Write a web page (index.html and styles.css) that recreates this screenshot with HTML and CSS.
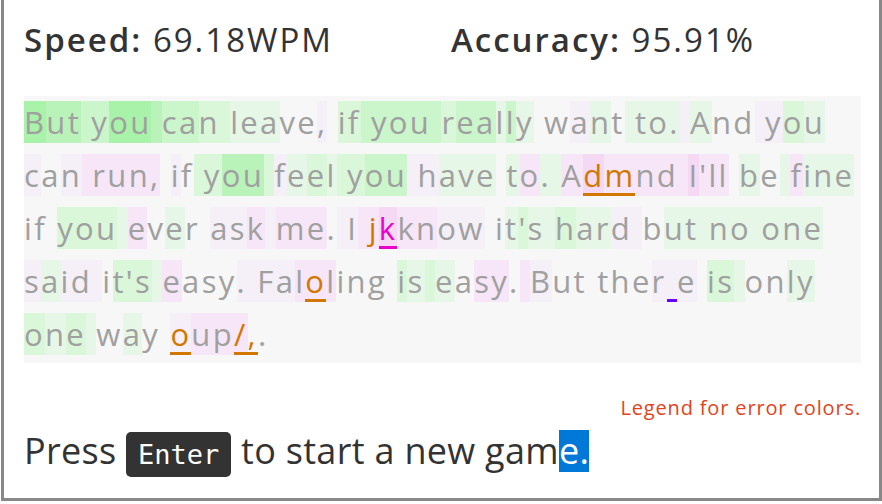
FILE: index.html
```html
<!DOCTYPE html>
<html>
<head>
<meta charset="utf-8">
<link rel="stylesheet" href="styles.css">
</head>
<body>
<div class="game">
  <div class="stats">
    <div class="stat"><span class="label">Speed:</span> 69.18WPM</div>
    <div class="stat"><span class="label">Accuracy:</span> 95.91%</div>
  </div>
  <div class="text">
<span class="g1">B</span><span class="g2">ut</span><span class="g3"> y</span><span class="g1">ou</span><span class="g2"> </span><span class="g3">ca</span><span class="g4">n </span><span class="g5">lea</span><span>ve</span><span class="p3">,</span><span> </span><span class="g4">if</span><span class="g3"> you </span><span class="g4">r</span><span class="g3">ea</span><span class="g5">l</span><span class="g3">l</span><span class="g5">y</span><span> w</span><span class="p3">a</span><span class="g5">n</span><span>t</span><span class="g5"> to.</span><span class="p3"> </span><span class="g5">A</span><span>nd</span><span class="p3"> y</span><span class="g4">o</span><span class="g5">u</span><br><span class="p3">c</span><span>a</span><span class="p3">n</span><span class="p2"> run,</span><span> </span><span class="p3">i</span><span>f</span><span class="g4"> y</span><span class="g2">ou</span><span class="g4"> </span><span class="p3">f</span><span class="g5">e</span><span class="g4">e</span><span class="g5">l</span><span class="g4"> y</span><span class="g3">ou</span><span class="p3"> h</span><span class="g5">ave</span><span> </span><span class="g5">t</span><span class="p2">o</span><span class="g5">. </span><span class="p2">A</span><span class="p1 err uo">d</span><span class="p2 err uo">m</span><span class="p2">nd </span><span class="p1">I</span><span class="p2">'ll</span><span> </span><span class="g5">b</span><span>e</span><span class="g5"> </span><span class="p2">f</span><span class="g5">ine</span><br><span>if </span><span class="g4">you</span><span class="g5"> </span><span class="p2">e</span><span>v</span><span class="g5">e</span><span>r </span><span class="p3">as</span><span class="p2">k</span><span class="p3"> </span><span class="p2">me</span><span>.</span><span class="p3"> I</span><span class="p2"> </span><span class="p2 err">j</span><span class="p1 mag">k</span><span class="p2">kn</span><span class="p3">ow</span><span> i</span><span class="g5">t</span><span class="g4">'</span><span class="g5">s </span><span class="g4">h</span><span class="g5">ar</span><span class="p3">d </span><span>b</span><span class="g5">ut no one</span><br><span class="p3">s</span><span class="g5">a</span><span class="p3">id </span><span>i</span><span class="g4">t'</span><span class="g4">s</span><span class="g5"> </span><span class="p2">e</span><span>asy</span><span class="p3">. Fa</span><span class="p2">l</span><span class="p2 err uo">o</span><span class="p2">l</span><span>ing </span><span class="g4">i</span><span class="g5">s</span><span class="g4"> </span><span class="g5">e</span><span>a</span><span class="p2">sy</span><span>.</span><span class="p2"> </span><span class="p3">B</span><span>ut the</span><span class="p3">r</span><span class="p3 up"> </span><span class="p3">e</span><span> </span><span class="g4">is</span><span class="g5"> </span><span>on</span><span class="g5">ly</span><br><span class="g4">o</span><span class="g5">n</span><span class="g4">e</span><span class="g5"> </span><span>w</span><span class="g5">a</span><span>y </span><span class="p3 err uo">o</span><span class="p2">up</span><span class="p2 err uo">/</span><span class="err uo">,</span><span>.</span>
  </div>
  <div class="legend">Legend for error colors.</div>
  <div class="prompt">Press <kbd class="key">Enter</kbd> to start a new gam<span class="sel">e.</span></div>
</div>
</body>
</html>
```
FILE: styles.css
```css
html, body {
  margin: 0;
  padding: 0;
  background: #fff;
}
body {
  font-family: "Open Sans", "Noto Sans", sans-serif;
  color: #333;
}
.game {
  margin: 0 0 5px 1px;
  border: 3px solid #888;
  border-top: none;
  padding: 20px 18px 21px 20px;
}
.stats {
  display: grid;
  grid-template-columns: 427px auto;
  font-size: 33px;
  letter-spacing: 2px;
  line-height: 40px;
  height: 40px;
  margin-bottom: 36px;
  white-space: nowrap;
}
.label {
  font-weight: 600;
}
.text {
  background: #f7f7f7;
  color: #a0a0a0;
  font-size: 31px;
  letter-spacing: 2.3px;
  line-height: 53px;
  white-space: nowrap;
  padding-bottom: 2px;
}
.g1 { background: #a9f2a9; }
.g2 { background: #baf3ba; }
.g3 { background: #cbf5cb; }
.g4 { background: #daf7da; }
.g5 { background: #e7f7e7; }
.p1 { background: #f4d8f4; }
.p2 { background: #f7e6f7; }
.p3 { background: #f5eff7; }
.err { color: #d27700; }
.uo { box-shadow: inset 0 -3px 0 #d27700; }
.mag { color: #ee00cc; box-shadow: inset 0 -3px 0 #ee00cc; }
.up { box-shadow: inset 0 -3px 0 #6a00ff; }
.legend {
  margin-top: 33px;
  text-align: right;
  font-size: 20px;
  letter-spacing: 0.85px;
  line-height: 24px;
  color: #e0441c;
}
.prompt {
  margin-top: 8px;
  font-size: 36px;
  letter-spacing: 0.3px;
  line-height: 46px;
  white-space: nowrap;
}
.key {
  display: inline-block;
  background: #333;
  color: #fff;
  font-family: "DejaVu Sans Mono", monospace;
  font-size: 27px;
  letter-spacing: 0;
  line-height: 45px;
  height: 45px;
  padding: 0 12px;
  border-radius: 5px;
}
.sel {
  display: inline-block;
  background: #0078d7;
  color: #fff;
  line-height: 42px;
}
```
